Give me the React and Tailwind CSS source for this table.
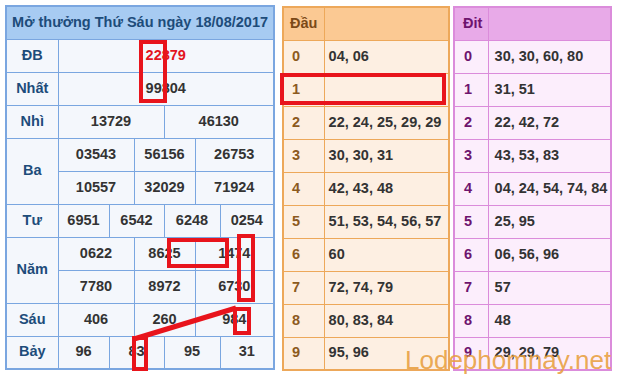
import React from "react";

const font = { fontFamily: '"Liberation Sans", Arial, sans-serif' };

// main results table cells
const Cell = ({ span = 1, red, children }) => (
  <td
    colSpan={span}
    className={`border border-[#7aa6e0] bg-[#f4f7fc] text-center font-bold ${red ? "text-[#e3141e]" : "text-[#333333]"}`}
  >
    {children}
  </td>
);

const Label = ({ rows = 1, children }) => (
  <td rowSpan={rows} className="border border-[#7aa6e0] bg-[#f4f7fc] text-center font-bold text-[#1d4c7a]">
    {children}
  </td>
);

const dau = [
  ["0", "04, 06"],
  ["1", ""],
  ["2", "22, 24, 25, 29, 29"],
  ["3", "30, 30, 31"],
  ["4", "42, 43, 48"],
  ["5", "51, 53, 54, 56, 57"],
  ["6", "60"],
  ["7", "72, 74, 79"],
  ["8", "80, 83, 84"],
  ["9", "95, 96"],
];

const dit = [
  ["0", "30, 30, 60, 80"],
  ["1", "31, 51"],
  ["2", "22, 42, 72"],
  ["3", "43, 53, 83"],
  ["4", "04, 24, 54, 74, 84"],
  ["5", "25, 95"],
  ["6", "06, 56, 96"],
  ["7", "57"],
  ["8", "48"],
  ["9", "29, 29, 79"],
];

export default function App() {
  return (
    <div className="relative w-[619px] h-[375px] overflow-hidden bg-white text-[14.5px]" style={font}>
      <div className="flex items-start pl-[5px] pt-[5px]">
        {/* ket qua */}
        <table className="table-fixed border-collapse border-2 border-[#7aa6e0] w-[268px]">
          <colgroup>
            <col className="w-[52px]" />
            <col className="w-[51px]" />
            <col className="w-[25px]" />
            <col className="w-[30px]" />
            <col className="w-[31px]" />
            <col className="w-[25px]" />
            <col className="w-[54px]" />
          </colgroup>
          <tbody>
            <tr className="h-[33px]">
              <td colSpan={7} className="border border-[#7aa6e0] bg-[#a7cbf2] text-center font-bold text-[#1d4c7a] whitespace-nowrap">
                Mở thưởng Thứ Sáu ngày 18/08/2017
              </td>
            </tr>
            <tr className="h-[33px]">
              <Label>ĐB</Label>
              <Cell span={6} red>22879</Cell>
            </tr>
            <tr className="h-[33px]">
              <Label>Nhất</Label>
              <Cell span={6}>99804</Cell>
            </tr>
            <tr className="h-[33px]">
              <Label>Nhì</Label>
              <Cell span={3}>13729</Cell>
              <Cell span={3}>46130</Cell>
            </tr>
            <tr className="h-[33px]">
              <Label rows={2}>Ba</Label>
              <Cell span={2}>03543</Cell>
              <Cell span={2}>56156</Cell>
              <Cell span={2}>26753</Cell>
            </tr>
            <tr className="h-[33px]">
              <Cell span={2}>10557</Cell>
              <Cell span={2}>32029</Cell>
              <Cell span={2}>71924</Cell>
            </tr>
            <tr className="h-[33px]">
              <Label>Tư</Label>
              <Cell>6951</Cell>
              <Cell span={2}>6542</Cell>
              <Cell span={2}>6248</Cell>
              <Cell>0254</Cell>
            </tr>
            <tr className="h-[33px]">
              <Label rows={2}>Năm</Label>
              <Cell span={2}>0622</Cell>
              <Cell span={2}>8625</Cell>
              <Cell span={2}>1474</Cell>
            </tr>
            <tr className="h-[33px]">
              <Cell span={2}>7780</Cell>
              <Cell span={2}>8972</Cell>
              <Cell span={2}>6730</Cell>
            </tr>
            <tr className="h-[33px]">
              <Label>Sáu</Label>
              <Cell span={2}>406</Cell>
              <Cell span={2}>260</Cell>
              <Cell span={2}>984</Cell>
            </tr>
            <tr className="h-[33px]">
              <Label>Bảy</Label>
              <Cell>96</Cell>
              <Cell span={2}>83</Cell>
              <Cell span={2}>95</Cell>
              <Cell>31</Cell>
            </tr>
          </tbody>
        </table>

        {/* dau */}
        <table className="ml-[7px] mt-px table-fixed border-collapse border-2 border-[#eda85a] w-[166px]">
          <colgroup>
            <col className="w-[41px]" />
            <col className="w-[125px]" />
          </colgroup>
          <tbody>
            <tr className="h-[33px] bg-[#fbc993]">
              <td className="border border-[#eda85a] pl-[6px] font-bold text-[#7b4a18]">Đầu</td>
              <td className="border border-[#eda85a]"></td>
            </tr>
            {dau.map(([d, v]) => (
              <tr key={d} className="h-[33px] bg-[#fdefe2]">
                <td className="border border-[#eda85a] pl-[8px] font-bold text-[#8c5a1e]">{d}</td>
                <td className="border border-[#eda85a] pl-[4px] font-bold text-[#333333] whitespace-nowrap">{v}</td>
              </tr>
            ))}
          </tbody>
        </table>

        {/* dit */}
        <table className="ml-[3px] mt-px table-fixed border-collapse border-2 border-[#db8cdb] w-[157px]">
          <colgroup>
            <col className="w-[34px]" />
            <col className="w-[123px]" />
          </colgroup>
          <tbody>
            <tr className="h-[33px] bg-[#e8aae8]">
              <td className="border border-[#db8cdb] pl-[8px] font-bold text-[#6e146e]">Đit</td>
              <td className="border border-[#db8cdb]"></td>
            </tr>
            {dit.map(([d, v]) => (
              <tr key={d} className="h-[33px] bg-[#fceefc]">
                <td className="border border-[#db8cdb] pl-[9px] font-bold text-[#6e146e]">{d}</td>
                <td className="border border-[#db8cdb] pl-[6px] font-bold text-[#333333] whitespace-nowrap">{v}</td>
              </tr>
            ))}
          </tbody>
        </table>
      </div>

      {/* red marks drawn over the tables */}
      <svg className="pointer-events-none absolute inset-0" width="619" height="375" viewBox="0 0 619 375">
        <g fill="none" stroke="#e8141c" strokeWidth="4">
          <rect x="141" y="42" width="24" height="59" />
          <rect x="282" y="75" width="162" height="28" />
          <rect x="169" y="240" width="58" height="26" />
          <rect x="239" y="236" width="14" height="64" />
          <rect x="235" y="309" width="14" height="24" />
          <rect x="134" y="338" width="12" height="31" />
        </g>
        <line x1="134" y1="339" x2="236" y2="308" stroke="#e8141c" strokeWidth="5" />
      </svg>

      <div className="pointer-events-none absolute left-[405px] top-[347px] text-[26px] leading-none text-[#e8a040]/90 whitespace-nowrap">
        Lodephomnay.net
      </div>
    </div>
  );
}
